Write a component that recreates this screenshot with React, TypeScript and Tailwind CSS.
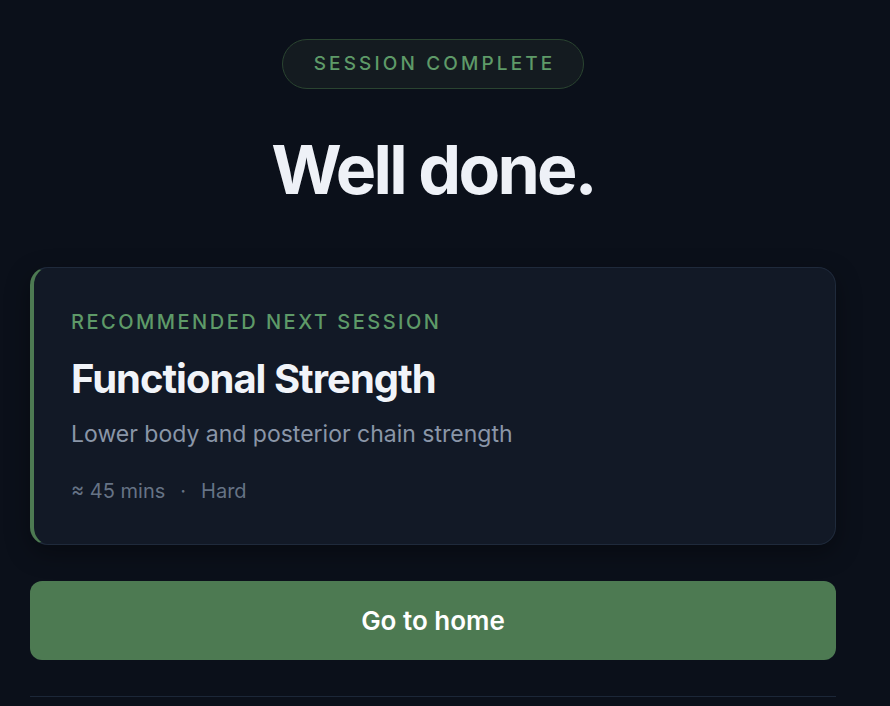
import React from "react";

export default function App() {
  return (
    <div className="min-h-[706px] w-full bg-[#0b101a] overflow-hidden" style={{ fontFamily: "Inter, 'Noto Sans', sans-serif" }}>
      <div className="ml-[30px] w-[806px] flex flex-col items-center pt-[39px]">
        <div className="h-[50px] w-[302px] rounded-full border border-[#2a4430] bg-[#141b20] flex items-center justify-center">
          <span className="text-[19px] font-medium tracking-[0.165em] text-[#5e9a68] pl-[3px]">SESSION COMPLETE</span>
        </div>
        <h1 className="mt-[40px] text-[68px] leading-[80px] font-bold tracking-[-0.04em] text-[#eef1f7]">Well done.</h1>
        <div className="mt-[58px] w-full rounded-[18px] border border-[#1f2a3b] border-l-[4px] border-l-[#4d7a52] bg-[#121926] pl-[37px] pt-[40px] pb-[39px] shadow-[0_8px_24px_rgba(0,0,0,0.35)]">
          <div className="text-[20px] font-medium tracking-[0.125em] text-[#5e9a68] leading-[28px]">RECOMMENDED NEXT SESSION</div>
          <div className="mt-[18px] text-[40px] font-bold tracking-[-0.025em] leading-[50px] text-[#f1f4f9]">Functional Strength</div>
          <div className="mt-[14px] text-[23px] leading-[32px] text-[#8a96a8]">Lower body and posterior chain strength</div>
          <div className="mt-[27px] flex items-center text-[20px] leading-[28px] text-[#667385]">
            <span>≈ 45 mins</span>
            <span className="mx-[15px]">·</span>
            <span>Hard</span>
          </div>
        </div>
        <button className="mt-[36px] w-full h-[79px] rounded-[12px] bg-[#4d7a52] text-white text-[26px] font-semibold">Go to home</button>
        <div className="mt-[36px] w-full h-px bg-[#1c2738]" />
      </div>
    </div>
  );
}
